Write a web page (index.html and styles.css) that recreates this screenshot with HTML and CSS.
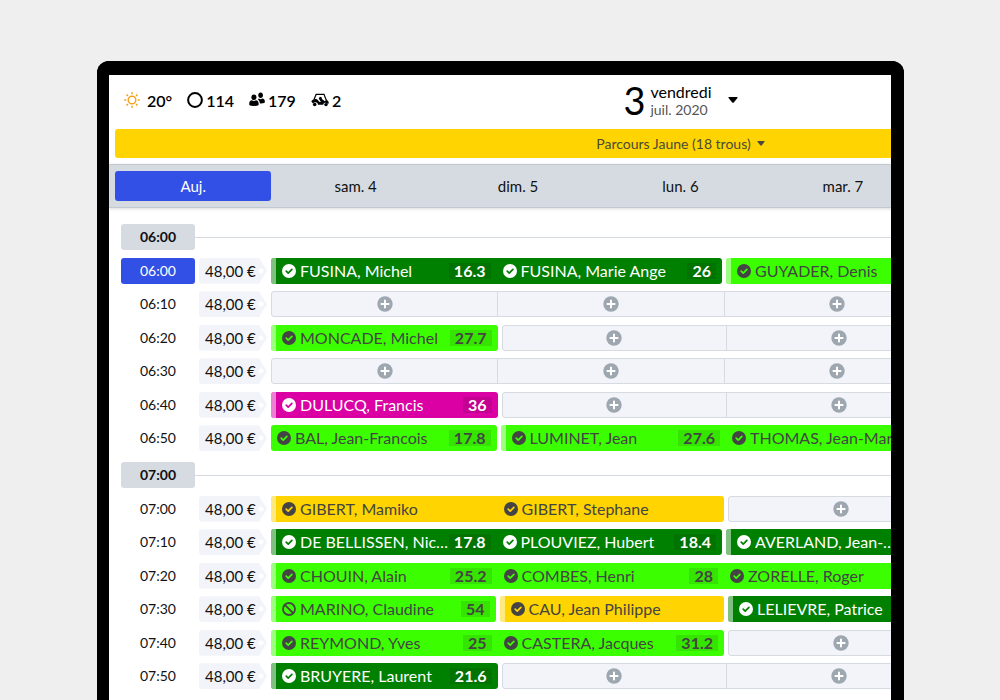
FILE: index.html
```html
<!DOCTYPE html>
<html lang="fr">
<head>
    <meta charset="UTF-8">
    <title>Départs</title>
    <link rel="stylesheet" href="styles.css">
</head>
<body>

    <svg class="sprite" aria-hidden="true">
        <symbol id="icon-check" viewBox="0 0 14 14">
            <circle cx="7" cy="7" r="7" fill="currentColor"/>
            <path class="icon-mark" d="M4.2 7.1l2 2 3.7-3.8" fill="none" stroke-width="1.7" stroke-linecap="round" stroke-linejoin="round"/>
        </symbol>
        <symbol id="icon-ban" viewBox="0 0 14 14">
            <circle cx="7" cy="7" r="6" fill="none" stroke="currentColor" stroke-width="1.8"/>
            <path d="M2.8 2.8l8.4 8.4" stroke="currentColor" stroke-width="1.8"/>
        </symbol>
        <symbol id="icon-plus" viewBox="0 0 16 16">
            <circle cx="8" cy="8" r="7.7" fill="currentColor"/>
            <path d="M8 4.4v7.2M4.4 8h7.2" stroke="#fff" stroke-width="2" stroke-linecap="round"/>
        </symbol>
    </svg>

    <div class="device">
        <div class="app">
            <header class="topbar">
                <ul class="stats">
                    <li class="stat stat-weather">
                        <svg class="icon-sun" viewBox="0 0 16 16" width="16" height="16">
                            <circle cx="8" cy="8" r="3.8" fill="none" stroke="currentColor" stroke-width="1.4"/>
                            <path d="M8 .3v2M8 13.7v2M.3 8h2M13.7 8h2M2.6 2.6l1.3 1.3M12.1 12.1l1.3 1.3M2.6 13.4l1.3-1.3M12.1 3.9l1.3-1.3" stroke="currentColor" stroke-width="1.6"/>
                        </svg>
                        20°
                    </li>
                    <li class="stat">
                        <svg viewBox="0 0 16 16" width="16" height="16">
                            <circle cx="8" cy="8" r="6.9" fill="none" stroke="currentColor" stroke-width="2"/>
                        </svg>
                        114
                    </li>
                    <li class="stat">
                        <svg viewBox="0 0 16 16" width="16" height="16" fill="currentColor">
                            <ellipse cx="4.9" cy="5.2" rx="2.5" ry="2.8"/>
                            <path d="M.2 12c0-2.300 1-3.500 2.700-3.700 1.200 1 2.800 1 4 0 1.800.200 2.800 1.400 2.800 3.700 0 1.600-1 1.900-4.700 1.900S.2 13.600.2 12z"/>
                            <ellipse cx="11.600" cy="3.200" rx="2.300" ry="2.700"/>
                            <path d="M8.900 7.400l1-.9c.9.900 2.400.900 3.300 0 1.900.200 2.700 1.400 2.700 3.200 0 1.400-1 1.800-5 1.700-.1-1.900-.9-3.300-2-4z"/>
                        </svg>
                        179
                    </li>
                    <li class="stat">
                        <svg viewBox="0 0 18 16" width="18" height="16">
                            <path d="M4.800 2.300h8.200l2.300 6" fill="none" stroke="currentColor" stroke-width="1.200"/>
                            <path d="M5.200 2.300L3 7.600" fill="none" stroke="currentColor" stroke-width="1.200"/>
                            <path d="M.3 9.500c.8-2.300 3.200-3.100 5.700-2.300l2.600 2.700h1.300L7.700 6.600l1.200-1.900 1.700.6.300 1.800 3 2.200 1.300-1.500c1.500.6 2.500 1.700 2.700 3.600l-2.100.3c-1-1.400-2.900-1.200-3.600 1H7c-.5-2.600-3.400-3.200-5-1.200z" fill="currentColor"/>
                            <circle cx="3.700" cy="12.500" r="1.800" fill="currentColor"/>
                            <circle cx="15" cy="12.600" r="1.700" fill="currentColor"/>
                        </svg>
                        2
                    </li>
                </ul>
                <button type="button" class="date">
                    <span class="date-number">3</span>
                    <span class="date-text">
                        <span class="date-day">vendredi</span>
                        <span class="date-month">juil. 2020</span>
                    </span>
                    <svg class="date-caret" viewBox="0 0 10 6" width="10" height="6"><path d="M1 0h8q1 0 .4.900L6 5.300q-1 1-2 0L.6.900Q0 0 1 0z" fill="currentColor"/></svg>
                </button>
            </header>

            <button type="button" class="course">
                Parcours Jaune (18 trous)
                <svg viewBox="0 0 10 6" width="8" height="5"><path d="M1 0h8q1 0 .4.900L6 5.300q-1 1-2 0L.6.900Q0 0 1 0z" fill="currentColor"/></svg>
            </button>

            <nav class="days">
                <button type="button" class="day day-active">Auj.</button>
                <button type="button" class="day">sam. 4</button>
                <button type="button" class="day">dim. 5</button>
                <button type="button" class="day">lun. 6</button>
                <button type="button" class="day">mar. 7</button>
                <button type="button" class="day">mer. 8</button>
                <button type="button" class="day">jeu. 9</button>
            </nav>

            <main class="sheet" id="sheet"></main>
        </div>
    </div>

    <script src="script.js"></script>
</body>
</html>
```

FILE: styles.css
```css
* {
    box-sizing: border-box;
}
body {
    margin: 0;
    height: 100vh;
    padding: 61px 96px 0 97px;
    overflow: hidden;
    background: #efefef;
    color: #111;
    font-family: Lato, "Liberation Sans", sans-serif;
    font-size: 15px;
}
button {
    margin: 0;
    padding: 0;
    border: 0;
    background: none;
    color: inherit;
    font: inherit;
    cursor: pointer;
}
.sprite {
    display: none;
}

/* Cadre de la tablette */
.device {
    height: 100%;
    border: solid #000;
    border-width: 14px 13px 0 12px;
    border-radius: 12px 12px 0 0;
    background: #fff;
    overflow: hidden;
}
.app {
    min-width: 1143px;
}

/* En-tête */
.topbar {
    display: grid;
    grid-template-columns: 1fr auto 1fr;
    align-items: center;
    height: 54px;
    padding: 0 15px 4px;
    color: #000;
}
.stats {
    display: flex;
    gap: 15px;
    margin: 0;
    padding: 0;
    list-style: none;
    font-size: 16px;
    font-weight: 600;
}
.stat {
    display: flex;
    align-items: center;
    gap: 3px;
}
.stat-weather {
    gap: 7px;
}
.icon-sun {
    color: #f9a01b;
}
.date {
    display: flex;
    align-items: center;
    gap: 5px;
    text-align: left;
}
.date-number {
    font-size: 38px;
    line-height: 40px;
}
.date-text {
    display: flex;
    flex-direction: column;
}
.date-day {
    font-size: 16px;
    line-height: 18px;
}
.date-month {
    color: #555;
    font-size: 14px;
    line-height: 17px;
}
.date-caret {
    margin-left: 11px;
}
.course {
    display: flex;
    align-items: center;
    justify-content: center;
    gap: 6px;
    width: calc(100% - 12px);
    height: 29px;
    margin: 0 6px;
    border-radius: 3px;
    background: #ffd400;
    color: #4a4a3c;
    font-size: 14px;
}

/* Barre des jours */
.days {
    display: grid;
    grid-template-columns: repeat(7, 1fr);
    gap: 6px;
    margin-top: 6px;
    padding: 6px;
    border: solid #c2c9d0;
    border-width: 1px 0;
    background: #d5dbe1;
    box-shadow: 0 1px 3px rgba(0, 0, 0, 0.15);
}
.day {
    height: 30px;
    border-radius: 3px;
}
.day-active {
    background: #324fe6;
    color: #fff;
}

/* Feuille de départs */
.sheet {
    display: flex;
    flex-direction: column;
    gap: 7px;
    padding: 16px 0 0 12px;
}
.hour-label {
    display: flex;
    align-items: center;
    margin: 0 0 4px;
    font-size: 14px;
}
.hour-label span {
    width: 74px;
    border-radius: 3px;
    background: #d5dbe1;
    line-height: 26px;
    text-align: center;
}
.hour-label::after {
    content: "";
    flex: 1;
    height: 1px;
    background: #d5dbe1;
}
.hour-rows {
    display: grid;
    grid-template-columns: minmax(0, 1fr);
    grid-auto-rows: 1fr;
    align-items: center;
    height: 201px;
}
.row {
    display: flex;
    gap: 4px;
    height: 26px;
    padding-right: 75px;
    line-height: 26px;
}
.time {
    flex: none;
    width: 74px;
    border-radius: 3px;
    font-size: 14px;
    text-align: center;
}
.time-current {
    background: #324fe6;
    color: #fff;
}
.price {
    flex: none;
    width: 68px;
    padding-left: 6px;
    border-radius: 3px;
    background: radial-gradient(circle at 62px 13px, #fff 2px, #f2f4f9 3px);
    clip-path: polygon(0 0, 60px 0, 100% 50%, 60px 100%, 0 100%);
    white-space: nowrap;
}
.slots {
    display: flex;
    flex: 1;
    gap: 4px;
    min-width: 0;
}

/* Groupe de joueurs */
.group {
    display: flex;
    flex-grow: 0;
    flex-shrink: 1;
    min-width: 0;
    border-radius: 3px;
    background: var(--fond);
    color: #444;
    overflow: hidden;
}
.size-1 { flex-basis: 25%; }
.size-2 { flex-basis: 50%; }
.size-3 { flex-basis: 75%; }
.size-4 { flex-basis: 100%; }
.green { --fond: #008000; color: #fff; }
.lime { --fond: #3bff00; }
.yellow { --fond: #ffd400; }
.pink { --fond: #db00a4; color: #fff; }

.player {
    display: flex;
    flex: 1 1 25%;
    align-items: center;
    min-width: 0;
    padding: 0 6px;
    font-size: 16px;
    text-align: left;
}
.linked .player:first-child {
    border-left: 5px solid rgba(255, 255, 255, 0.5);
}
.player svg {
    flex: none;
    width: 14px;
    height: 14px;
    margin-right: 4px;
}
.icon-mark {
    stroke: var(--fond);
}
.name {
    flex: 1;
    min-width: 0;
    line-height: 20px;
    overflow: hidden;
    text-overflow: ellipsis;
    white-space: nowrap;
}
.index {
    padding: 0 5px;
    background: rgba(0, 0, 0, 0.1);
    font-weight: bold;
    line-height: 16px;
}

/* Places libres */
.free {
    display: flex;
    flex: 1 1 0;
    border: 1px solid #d5dbe1;
    border-radius: 3px;
    background: #f2f4f9;
}
.add {
    display: flex;
    flex: 1 1 0;
    align-items: center;
    justify-content: center;
    color: #9ea7b0;
}
.add + .add {
    border-left: 1px solid #d5dbe1;
}
.add svg {
    width: 16px;
    height: 16px;
}
```

FILE: script.js
```js
// Un groupe : couleur, lié (liseré à gauche), joueurs [nom, index, icône]
// Un nombre : places libres
const heures = [
    {
        heure: '06:00',
        departs: [
            ['06:00', [
                { couleur: 'green', lie: true, joueurs: [['FUSINA, Michel', '16.3'], ['FUSINA, Marie Ange', '26']] },
                { couleur: 'lime', lie: true, joueurs: [['GUYADER, Denis', '19'], ['GUYADER, Anne', '24']] }
            ]],
            ['06:10', [4]],
            ['06:20', [{ couleur: 'lime', lie: true, joueurs: [['MONCADE, Michel', '27.7']] }, 3]],
            ['06:30', [4]],
            ['06:40', [{ couleur: 'pink', lie: true, joueurs: [['DULUCQ, Francis', '36']] }, 3]],
            ['06:50', [
                { couleur: 'lime', joueurs: [['BAL, Jean-Francois', '17.8']] },
                { couleur: 'lime', lie: true, joueurs: [['LUMINET, Jean', '27.6'], ['THOMAS, Jean-Marc', '20'], ['THOMAS, Claire', '31']] }
            ]]
        ]
    },
    {
        heure: '07:00',
        departs: [
            ['07:00', [{ couleur: 'yellow', lie: true, joueurs: [['GIBERT, Mamiko'], ['GIBERT, Stephane']] }, 2]],
            ['07:10', [
                { couleur: 'green', lie: true, joueurs: [['DE BELLISSEN, Nicolas', '17.8'], ['PLOUVIEZ, Hubert', '18.4']] },
                { couleur: 'green', lie: true, joueurs: [['AVERLAND, Jean-Pierre', '15.2'], ['AVERLAND, Anne', '22']] }
            ]],
            ['07:20', [
                { couleur: 'lime', lie: true, joueurs: [['CHOUIN, Alain', '25.2'], ['COMBES, Henri', '28'], ['ZORELLE, Roger', '21'], ['ZORELLE, Marie', '30']] }
            ]],
            ['07:30', [
                { couleur: 'lime', lie: true, joueurs: [['MARINO, Claudine', '54', 'ban']] },
                { couleur: 'yellow', lie: true, joueurs: [['CAU, Jean Philippe']] },
                { couleur: 'green', lie: true, joueurs: [['LELIEVRE, Patrice', '14'], ['LELIEVRE, Sophie', '26']] }
            ]],
            ['07:40', [{ couleur: 'lime', lie: true, joueurs: [['REYMOND, Yves', '25'], ['CASTERA, Jacques', '31.2']] }, 2]],
            ['07:50', [{ couleur: 'green', lie: true, joueurs: [['BRUYERE, Laurent', '21.6']] }, 3]]
        ]
    }
];

const heureCourante = '06:00';

function icone(nom) {
    return `<svg aria-hidden="true"><use href="#icon-${nom}"/></svg>`;
}

function joueurHtml([nom, index, type]) {
    const badge = index ? `<span class="index">${index}</span>` : '';
    return `<button type="button" class="player">${icone(type || 'check')}<span class="name">${nom}</span>${badge}</button>`;
}

function groupeHtml(groupe) {
    if (typeof groupe === 'number') {
        const bouton = `<button type="button" class="add" aria-label="Ajouter">${icone('plus')}</button>`;
        return `<div class="free">${bouton.repeat(groupe)}</div>`;
    }
    const lie = groupe.lie ? 'linked' : '';
    return `<div class="group size-${groupe.joueurs.length} ${groupe.couleur} ${lie}">${groupe.joueurs.map(joueurHtml).join('')}</div>`;
}

function departHtml([heure, groupes]) {
    const courant = heure === heureCourante ? 'time-current' : '';
    return `<div class="row">
        <span class="time ${courant}">${heure}</span>
        <span class="price">48,00 €</span>
        <div class="slots">${groupes.map(groupeHtml).join('')}</div>
    </div>`;
}

document.getElementById('sheet').innerHTML = heures.map(bloc => `
    <section>
        <h2 class="hour-label"><span>${bloc.heure}</span></h2>
        <div class="hour-rows">${bloc.departs.map(departHtml).join('')}</div>
    </section>
`).join('');
```
